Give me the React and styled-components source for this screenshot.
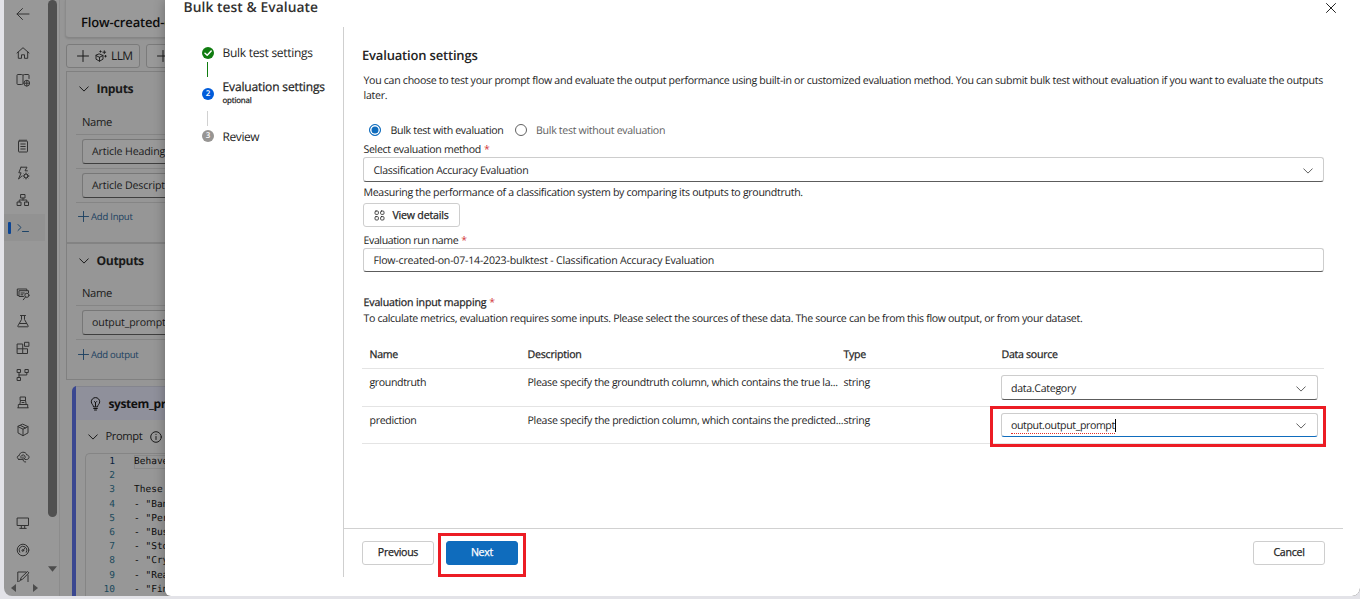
import React from 'react';
import styled, { createGlobalStyle, css } from 'styled-components';

const GlobalStyle = createGlobalStyle`
  * { box-sizing: border-box; }
  body {
    margin: 0;
    background: #e3e3e8;
    font-family: 'Open Sans', 'Noto Sans', sans-serif;
    font-size: 10.6px;
    color: #242424;
    overflow: hidden;
    text-rendering: geometricPrecision;
  }
`;

const Window = styled.div`
  position: relative;
  display: flex;
  width: 1356px;
  height: 596px;
  margin-left: 4px;
  background: #989898;
  border-radius: 0 0 8px 8px;
  overflow: hidden;
`;

const Text = styled.span`
  display: block;
  flex: none;
  white-space: nowrap;
  font-size: ${(p) => p.$size || 10.6}px;
  font-weight: ${(p) => p.$weight || 400};
  letter-spacing: ${(p) => p.$ls ?? -0.28}px;
  line-height: ${(p) => p.$h || 16}px;
  color: ${(p) => p.$color || 'inherit'};
  ${(p) => p.$medium && css`-webkit-text-stroke: 0.25px currentColor;`}
`;

const Svg = styled.svg`
  display: block;
  flex: none;
  fill: none;
  stroke: currentColor;
  stroke-width: ${(p) => p.$sw || 1};
  stroke-linecap: round;
  stroke-linejoin: round;
`;

/* ---------- icons ---------- */

const paths = {
  back: <path d="M13 7H1M6.5 1.5 1 7l5.500 5.500" />,
  home: <path d="M2.300 6v6.300H5.500V8.800h3v3.500h3.200V6M1 7l6-5.300L13 7" />,
  book: (
    <>
      <path d="M7 2.200C6.500 1.700 6 1.500 5.300 1.500H1.800c-.5 0-.8.300-.8.800v8.400c0 .5.300.8.800.8h3.500c.7 0 1.200-.2 1.700-.7V2.200c.5-.5 1-.7 1.700-.7h3.500c.5 0 .8.300.8.800v3.200" />
      <circle cx="10.800" cy="10.200" r="2.900" />
      <path d="M8 10.200h5.600M10.800 7.400v5.600" />
    </>
  ),
  notepad: (
    <>
      <rect x="2.500" y="2" width="9" height="11" rx=".6" />
      <path d="M4.800 5h4.400M4.800 7.500h4.400M4.800 10h4.400M4 .9v1M6 .9v1M8 .9v1M10 .9v1" />
    </>
  ),
  bolt: (
    <>
      <path d="M5 1.200h6L9 4.800h2.400M5 1.200 2.800 6.800h2.300L2.500 13l3.400-3" />
      <circle cx="10" cy="10" r="2" />
      <path d="M10 7v1M10 12v1M7 10h1M12 10h1M8 8l.6.6M12 12l-.6-.6M12 8l-.6.6M8 12l.6-.6" />
    </>
  ),
  sitemap: (
    <>
      <rect x="5" y="1.500" width="4" height="3.500" />
      <rect x="1.500" y="9" width="3.500" height="3.500" />
      <rect x="9" y="9" width="3.500" height="3.500" />
      <path d="M7 5v2M3.200 9V7h7.600v2" />
    </>
  ),
  prompt: <path d="M2 3.500 5 6.500 2 9.500M6.500 10.500h6" />,
  dataSearch: (
    <>
      <path d="M2.500 8.500H1.300V2h9.500v1.500" />
      <path d="M7.500 9.500H3V3.700h9.500v2M5 6h3.300M5 7.800h1.800" />
      <circle cx="10.900" cy="8.300" r="2.100" />
      <path d="m9.500 10-2.200 2.800" />
    </>
  ),
  flask: <path d="M5.500 1.500v4L1.800 12c-.2.400 0 .8.500.8h9.400c.5 0 .7-.4.500-.8L8.500 5.500v-4M4.500 1.500h5M3.500 9.500h7" />,
  blocks: (
    <>
      <path d="M1.500 3h5.200v9.500H1.500zM1.500 7.800h10v4.700H6.700" />
      <rect x="8.900" y="1.300" width="4" height="4" />
    </>
  ),
  flow: (
    <>
      <rect x="1.500" y="1.500" width="3" height="3" />
      <rect x="9.300" y="1.500" width="3" height="3" />
      <rect x="1.500" y="9.500" width="3" height="3" />
      <path d="M3 4.500v5M3 7h7.800V4.500" />
    </>
  ),
  stamp: <path d="M4.500 2h5v3.500h-5zM4.500 5.500 3.800 9.500M9.500 5.500l.7 4M1.800 12.800h10.400M2.300 12.500v-3h9.400v3M6 7.500h2" />,
  cube: <path d="M7 1.300 12 3.600v6.300L7 12.700 2 9.900V3.600zM2 3.600l5 2.600 5-2.600M7 6.200v6.500M4.500 2.500l5 2.500" />,
  cloud: (
    <>
      <path d="M3.500 9.500C.5 9.300.6 5.600 3.300 5.500 3.500 1.500 10 1 10.700 4.900c3.100.1 3.100 4.400 0 4.600H9" />
      <path d="M5 8a2.200 2.200 0 1 1 3.500.8M7 7v1.800c0 2 .8 3.400 2.700 3.200M2.500 9.400h4" />
    </>
  ),
  monitor: <path d="M1.500 2h11v7.500h-11zM5.300 9.500v2.700M8.700 9.500v2.700M3.800 12.400h6.400" />,
  gauge: (
    <>
      <circle cx="7" cy="7" r="5.800" />
      <path d="M3.700 9.200a3.900 3.900 0 0 1 5-5.600M10.500 5.300a4 4 0 0 1-.2 4M9.800 4 7 7.500" />
      <circle cx="6.800" cy="7.500" r=".9" />
    </>
  ),
  edit: <path d="M10 2H1.800v10.500H12V5M4.500 9.800l.6-2.200L11.500 1.500l1.400 1.300-6.200 6.300zM2.500 12 5 9.500" />,
};

const Icon = ({ name, size = 14, sw }) => (
  <Svg width={size} height={size} viewBox="0 0 14 14" $sw={sw}>{paths[name]}</Svg>
);

const Chevron = ({ size = 10 }) => (
  <Svg width={size} height={size} viewBox="0 0 10 10"><path d="m.7 2.800 4.300 4.300 4.300-4.300" /></Svg>
);

const Plus = ({ size = 12 }) => (
  <Svg width={size} height={size} viewBox="0 0 12 12"><path d="M6 .5v11M.5 6h11" /></Svg>
);

/* ---------- navigation rail ---------- */

const Rail = styled.nav`
  width: 44px;
  height: 596px;
  display: flex;
  flex-direction: column;
  color: #323232;
`;

const RailTop = styled.div`
  flex: none;
  height: 39px;
  padding: 7px 0 0 12px;
`;

const RailGroup = styled.div`
  flex: none;
  display: flex;
  flex-direction: column;
  margin-bottom: 39px;
`;

const LastGroup = styled(RailGroup)`
  height: 73px;
  margin-bottom: 0;
  overflow: hidden;
`;

const RailItem = styled.div`
  position: relative;
  flex: none;
  width: 41px;
  height: 27.200px;
  display: flex;
  align-items: center;
  padding-left: 12px;
  ${(p) => p.$active && css`
    background: #929292;
    color: #1d4468;
    &::before {
      content: '';
      position: absolute;
      left: 4px;
      top: 8px;
      width: 3px;
      height: 12px;
      border-radius: 1px;
      background: #0b4494;
    }
  `}
`;

const ScrollRow = styled.div`
  height: 14px;
  display: flex;
  gap: 14px;
  padding: 2px 0 0 6px;
`;

const ScrollTrack = styled.div`
  width: 9px;
  height: 596px;
  display: flex;
  flex-direction: column;
  align-items: center;
`;

const Thumb = styled.div`
  width: 9px;
  height: 517px;
  border-radius: 5px;
  background: #505050;
  margin-bottom: 48px;
`;

const Arrow = ({ d, w = 8, h = 8 }) => (
  <svg width={w} height={h} viewBox="0 0 8 8" fill="#4c4c4c"><path d={d} /></svg>
);

/* ---------- flow editor ---------- */

const Editor = styled.main`
  width: 200px;
  height: 596px;
  margin-left: 2px;
  padding-left: 6px;
  border-left: 1px solid #8c8c8c;
  background: #969696;
  display: flex;
  flex-direction: column;
  color: #1a1a1a;
  > * { flex: none; }
`;

const FlowTitle = styled.header`
  height: 38px;
  margin-left: -1px;
  padding: 14px 0 0 15px;
  background: #999;
  border-left: 1px solid #8b8b8b;
  border-bottom: 1px solid #858585;
  border-radius: 0 0 0 4px;
  box-shadow: 0 1px 2px rgba(0, 0, 0, 0.12);
  color: #0c0c0c;
`;

const Toolbar = styled.div`
  display: flex;
  gap: 6px;
  margin-top: 6px;
`;

const ToolButton = styled.div`
  width: 74px;
  height: 24px;
  flex: none;
  display: flex;
  align-items: center;
  padding-left: ${(p) => p.$left || 10}px;
  border: 1px solid #7b7b7b;
  border-radius: 3px;
  background: #999;
`;

const LlmIcon = styled(Svg)`
  margin: 0 4px 0 6px;
`;

const IoPanel = styled.section`
  margin-top: 3px;
  height: 309px;
  border: 1px solid #808080;
  border-right: 0;
  display: flex;
  flex-direction: column;
`;

const Section = styled.div`
  flex: none;
  height: ${(p) => p.$height}px;
  padding-left: 9px;
  border-bottom: ${(p) => (p.$last ? 0 : 2)}px solid #838383;
`;

const SectionHead = styled.div`
  display: flex;
  align-items: center;
  gap: 8px;
  height: 34px;
  padding-left: 2.5px;
`;

const ColumnHead = styled.div`
  height: ${(p) => p.$height}px;
  padding: ${(p) => p.$top}px 0 0 6px;
  border-bottom: 1px solid #858585;
`;

const FieldRow = styled.div`
  height: 34px;
  padding: 4px 0 0 6px;
  border-bottom: 1px solid #858585;
`;

const Field = styled.div`
  height: 25px;
  padding: 4px 0 0 9px;
  border: 1px solid #777;
  border-bottom-color: #3f3f3f;
  border-radius: 3px;
  background: #999;
`;

const AddLink = styled.div`
  display: flex;
  align-items: center;
  gap: 2px;
  height: ${(p) => p.$height || 27}px;
  padding-left: 2px;
  color: #1b3f60;
`;

const NodeCard = styled.section`
  margin: 6px 0 0 6px;
  height: 210px;
  border-left: 4px solid #3a4790;
  border-radius: 5px 0 0 0;
  background: #979797;
`;

const NodeHead = styled.div`
  height: 34px;
  display: flex;
  align-items: center;
  gap: 7.500px;
  padding-left: 14px;
  background: #8f909b;
  border-top: 1px solid #84858e;
  color: #111;
`;

const PromptRow = styled.div`
  height: 33px;
  display: flex;
  align-items: center;
  padding-left: 11.500px;
`;

const PromptLabel = styled(Text)`
  margin: 0 8px 0 8px;
`;

const CodeBox = styled.div`
  height: 143px;
  margin-left: 9px;
  padding-top: 1px;
  border: 1px solid #858585;
  border-right: 0;
  border-bottom: 0;
  border-radius: 5px 0 0 0;
  overflow: hidden;
  font: 9.5px/14.200px 'DejaVu Sans Mono', monospace;
`;

const CodeLine = styled.div`
  display: grid;
  grid-template-columns: 29px 1fr;
  column-gap: 19px;
  height: 14.200px;
  white-space: pre;
  color: #0e0e0e;
`;

const LineNo = styled.span`
  text-align: right;
  color: ${(p) => (p.$first ? '#0b2240' : '#1c4a5c')};
`;

const CodeText = styled.span`
  ${(p) => p.$first && css`
    box-shadow: inset 1px 1px #898989, inset 0 -1px #898989;
  `}
`;

/* ---------- dialog ---------- */

const Dialog = styled.section`
  position: absolute;
  left: 161px;
  top: 0;
  width: 1195px;
  height: 596px;
  background: #fff;
  border-radius: 0 0 8px 6px;
  box-shadow: 0 0 12px rgba(0, 0, 0, 0.3);
  display: flex;
  flex-direction: column;
`;

const DialogHead = styled.header`
  height: 27px;
  padding: 0 24px 0 18.500px;
  display: flex;
  justify-content: space-between;
`;

const CloseIcon = styled(Svg)`
  margin-top: 3px;
`;

const DialogBody = styled.div`
  display: flex;
  height: 550px;
`;

const Steps = styled.aside`
  width: 178px;
  padding: 16px 0 0 37px;
`;

const Step = styled.div`
  display: flex;
  align-items: center;
  gap: 8.500px;
  height: ${(p) => p.$height}px;
`;

const StepDot = styled.span`
  width: 12px;
  height: 12px;
  border-radius: 50%;
  background: ${(p) => p.$color};
  color: #fff;
  font-size: 8px;
  font-weight: 600;
  line-height: 12px;
  text-align: center;
  flex: none;
`;

const StepLabel = styled.div`
  display: flex;
  flex-direction: column;
  padding-bottom: ${(p) => p.$lift || 0}px;
  padding-top: ${(p) => p.$drop || 0}px;
`;

const Connector = styled.div`
  width: 1px;
  height: 15px;
  margin-left: 5px;
  background: ${(p) => p.$color};
`;

const Content = styled.div`
  width: 1000px;
  border-left: 1px solid #cfcfcf;
  display: flex;
  flex-direction: column;
`;

const Form = styled.div`
  flex: 1;
  width: 981px;
  padding: 18px 0 0 19px;
`;

const Heading = styled.div`
  height: 29px;
  margin-left: -1px;
`;

const Intro = styled.div`
  height: 47px;
  padding-left: 0.5px;
`;

const RadioRow = styled.div`
  display: flex;
  align-items: center;
  height: 18px;
  margin: 0 0 2px 6px;
  ${Text} { padding-top: 1px; }
`;

const Radio = styled.span`
  width: 12px;
  height: 12px;
  border: 1px solid ${(p) => (p.$on ? '#0f6cbd' : '#616161')};
  border-radius: 50%;
  background: ${(p) => (p.$on ? '#0f6cbd' : '#fff')};
  box-shadow: inset 0 0 0 1.500px #fff;
  margin: 0 9.500px 0 ${(p) => (p.$on ? 0 : 11)}px;
`;

const Label = styled.div`
  display: flex;
  gap: 3px;
  height: 16px;
  padding: 1px 0 0 0.5px;
`;

const Required = styled.span`
  color: #d13438;
  font-size: 10.5px;
  line-height: 16px;
`;

const Box = styled.div`
  position: relative;
  width: ${(p) => p.$width || 961}px;
  height: ${(p) => p.$height || 25}px;
  margin-left: ${(p) => p.$shift || 0}px;
  display: flex;
  align-items: center;
  justify-content: space-between;
  padding: ${(p) => p.$top ?? 2}px 10.500px 0 9.500px;
  border: 1px solid #cdcdcd;
  border-bottom-color: ${(p) => (p.$focus ? '#0f6cbd' : '#5c5c5c')};
  border-radius: 3px;
  color: #242424;
  > svg { color: #616161; }
`;

const Hint = styled.div`
  height: 21px;
  padding: 3px 0 0 0.5px;
`;

const Button = styled.button`
  display: flex;
  align-items: center;
  justify-content: center;
  gap: 7px;
  width: ${(p) => p.$width || 72}px;
  height: 24px;
  padding: 0 0 ${(p) => p.$lift || 0}px;
  border: 1px solid ${(p) => (p.$primary ? '#0f6cbd' : '#cecece')};
  border-radius: 3px;
  background: ${(p) => (p.$primary ? '#0f6cbd' : '#fff')};
  color: ${(p) => (p.$primary ? '#fff' : '#242424')};
  font-family: inherit;
`;

const RunName = styled.div`
  margin: 5px 0 22px;
`;

const Explanation = styled.div`
  padding: 1px 0 0 0.5px;
`;

const Table = styled.div`
  width: 962px;
  margin: 14px 0 0 -1px;
`;

const Row = styled.div`
  display: grid;
  grid-template-columns: 158px 316px 158px 317px;
  padding: 6px 0 0 7.500px;
  height: ${(p) => p.$height}px;
  border-bottom: 1px solid #e4e4e4;
`;

const Squiggle = styled(Text)`
  margin-top: 2px;
  border-bottom: 1px dotted #e03030;
`;

const Caret = styled.span`
  width: 1px;
  height: 13px;
  margin-right: auto;
  background: #000;
`;

const Callout = styled.div`
  position: absolute;
  inset: ${(p) => p.$inset};
  border: 3px solid #ec1c24;
  pointer-events: none;
`;

const Footer = styled.footer`
  height: 49px;
  display: flex;
  gap: 12px;
  padding: 12px 18px 0 18px;
  border-top: 1px solid #d1d1d1;
  width: 999px;
`;

const Highlighted = styled.div`
  position: relative;
  height: 24px;
  margin-right: auto;
`;

const code = ['Behave as', '', 'These are', '- "Banking"', '- "Personal', '- "Business', '- "Stocks"', '- "Crypto"', '- "Real', '- "Finance'];

const groups = [
  ['home', 'book'],
  ['notepad', 'bolt', 'sitemap', 'prompt'],
  ['dataSearch', 'flask', 'blocks', 'flow', 'stamp', 'cube', 'cloud'],
];

export default function App() {
  return (
    <>
      <GlobalStyle />
      <Window>
        <Rail>
          <RailTop><Icon name="back" /></RailTop>
          {groups.map((g) => (
            <RailGroup key={g[0]}>
              {g.map((n) => <RailItem key={n} $active={n === 'prompt'}><Icon name={n} /></RailItem>)}
            </RailGroup>
          ))}
          <LastGroup>
            {['monitor', 'gauge', 'edit'].map((n) => <RailItem key={n}><Icon name={n} /></RailItem>)}
          </LastGroup>
          <ScrollRow>
            <Arrow d="M6 0v8L1 4z" />
            <Arrow d="M1 0v8l5-4z" />
          </ScrollRow>
        </Rail>
        <ScrollTrack>
          <Thumb />
          <Arrow d="M0 1h8L4 6z" w={9} h={9} />
        </ScrollTrack>

        <Editor>
          <FlowTitle><Text $size={13} $weight={600} $ls={-0.15}>Flow-created-on</Text></FlowTitle>
          <Toolbar>
            <ToolButton>
              <Plus />
              <LlmIcon width="12" height="12" viewBox="0 0 12 12" $sw={0.9}>
                <path d="M4.500 4 8 5.500v3.700l-3.500 2L1 9.200V5.500zM1 5.500l3.500 1.800L8 5.500M4.500 7.300v3.900M9.300 .8v2.800M7.900 2.200h2.800M10.500 5.400v1.600M9.700 6.200h1.600M5.500 .8v1.400M4.800 1.500h1.400" />
              </LlmIcon>
              <Text $size={12} $ls={-0.6}>LLM</Text>
            </ToolButton>
            <ToolButton><Plus /></ToolButton>
          </Toolbar>
          <IoPanel>
            <Section $height={172}>
              <SectionHead><Chevron /><Text $size={12.200} $weight={700} $ls={-0.4}>Inputs</Text></SectionHead>
              <ColumnHead $height={29} $top={9}><Text $size={11.200} $ls={-0.35}>Name</Text></ColumnHead>
              <FieldRow><Field><Text $ls={-0.12}>Article Heading</Text></Field></FieldRow>
              <FieldRow><Field><Text $ls={-0.12}>Article Description</Text></Field></FieldRow>
              <AddLink><Plus size={11} /><Text $size={9.500} $ls={-0.22}>Add Input</Text></AddLink>
            </Section>
            <Section $height={135} $last>
              <SectionHead><Chevron /><Text $size={12.200} $weight={700} $ls={-0.4}>Outputs</Text></SectionHead>
              <ColumnHead $height={28} $top={8}><Text $size={11.200} $ls={-0.35}>Name</Text></ColumnHead>
              <FieldRow><Field><Text $ls={-0.12}>output_prompt</Text></Field></FieldRow>
              <AddLink $height={29}><Plus size={11} /><Text $size={9.500} $ls={-0.27}>Add output</Text></AddLink>
            </Section>
          </IoPanel>
          <NodeCard>
            <NodeHead>
              <Svg width="11" height="14" viewBox="0 0 11 14">
                <path d="M3.500 9.500C3.500 8 1.300 7 1.300 4.800a4.200 4.200 0 0 1 8.400 0C9.700 7 7.500 8 7.500 9.500zM3.700 11.500h3.600M4.500 13h2M5.500 9.300V5.500M4.300 4.500l1.200 1.200 1.200-1.200" />
              </Svg>
              <Text $size={12} $weight={700} $ls={-0.4}>system_prompt</Text>
            </NodeHead>
            <PromptRow>
              <Chevron />
              <PromptLabel $size={11.200} $ls={-0.42}>Prompt</PromptLabel>
              <Svg width="12" height="12" viewBox="0 0 12 12"><circle cx="6" cy="6" r="5.300" /><path d="M6 5.500v3M6 3.300v.2" /></Svg>
            </PromptRow>
            <CodeBox>
              {code.map((t, i) => (
                <CodeLine key={i}><LineNo $first={i === 0}>{i + 1}</LineNo><CodeText $first={i === 0}>{t}</CodeText></CodeLine>
              ))}
            </CodeBox>
          </NodeCard>
        </Editor>

        <Dialog>
          <DialogHead>
            <Text $size={13.800} $weight={600} $ls={0.07} $h={15} $color="#323130">Bulk test &amp; Evaluate</Text>
            <CloseIcon width="10" height="10" viewBox="0 0 10 10"><path d="m.5.500 9 9m0-9-9 9" /></CloseIcon>
          </DialogHead>
          <DialogBody>
            <Steps>
              <Step $height={19}>
                <StepDot $color="#107c10">
                  <Svg width="12" height="12" viewBox="0 0 12 12" $sw={1.500}><path d="m3 6.200 2.200 2.100L9.200 4" /></Svg>
                </StepDot>
                <Text $size={12} $ls={-0.28}>Bulk test settings</Text>
              </Step>
              <Connector $color="#107c10" />
              <Step $height={34}>
                <StepDot $color="#015cda">2</StepDot>
                <StepLabel $lift={1}>
                  <Text $size={12} $medium $ls={-0.14} $h={15}>Evaluation settings</Text>
                  <Text $size={7.900} $medium $ls={-0.16} $h={14}>optional</Text>
                </StepLabel>
              </Step>
              <Connector $color="#d1d1d1" />
              <Step $height={20}>
                <StepDot $color="#979593">3</StepDot>
                <StepLabel $drop={1}><Text $size={12} $ls={-0.42}>Review</Text></StepLabel>
              </Step>
            </Steps>
            <Content>
              <Form>
                <Heading><Text $size={13} $weight={600} $ls={-0.18} $h={20}>Evaluation settings</Text></Heading>
                <Intro>
                  <Text $h={15} $ls={-0.3}>You can choose to test your prompt flow and evaluate the output performance using built-in or customized evaluation method. You can submit bulk test without evaluation if you want to evaluate the outputs</Text>
                  <Text $h={15}>later.</Text>
                </Intro>
                <RadioRow>
                  <Radio $on />
                  <Text $ls={-0.32}>Bulk test with evaluation</Text>
                  <Radio />
                  <Text $color="#616161" $ls={-0.31}>Bulk test without evaluation</Text>
                </RadioRow>
                <Label><Text $ls={-0.32}>Select evaluation method</Text><Required>*</Required></Label>
                <Box><Text $ls={-0.31}>Classification Accuracy Evaluation</Text><Chevron /></Box>
                <Hint><Text $ls={-0.305}>Measuring the performance of a classification system by comparing its outputs to groundtruth.</Text></Hint>
                <Button $width={97}>
                  <Svg width="11" height="11" viewBox="0 0 11 11" $sw={0.8}>
                    <rect x="1" y="1" width="3.400" height="3.400" rx="1" /><rect x="6.600" y="1" width="3.400" height="3.400" rx="1" />
                    <rect x="1" y="6.600" width="3.400" height="3.400" rx="1" /><rect x="6.600" y="6.600" width="3.400" height="3.400" rx="1" />
                  </Svg>
                  <Text $medium $ls={-0.18}>View details</Text>
                </Button>
                <RunName>
                  <Label><Text $ls={-0.4}>Evaluation run name</Text><Required>*</Required></Label>
                  <Box $height={24} $top={1}><Text $ls={-0.215}>Flow-created-on-07-14-2023-bulktest - Classification Accuracy Evaluation</Text></Box>
                </RunName>
                <Label><Text $medium $ls={-0.15}>Evaluation input mapping</Text><Required>*</Required></Label>
                <Explanation>
                  <Text $ls={-0.335}>To calculate metrics, evaluation requires some inputs. Please select the sources of these data. The source can be from this flow output, or from your dataset.</Text>
                </Explanation>
                <Table>
                  <Row $height={28}>
                    <Text $medium>Name</Text><Text $medium $ls={-0.22}>Description</Text><Text $medium>Type</Text><Text $medium>Data source</Text>
                  </Row>
                  <Row $height={38}>
                    <Text $ls={-0.38}>groundtruth</Text>
                    <Text $ls={-0.32}>Please specify the groundtruth column, which contains the true la...</Text>
                    <Text>string</Text>
                    <Box $width={317} $shift={-1}><Text $ls={-0.3}>data.Category</Text><Chevron /></Box>
                  </Row>
                  <Row $height={37}>
                    <Text $ls={-0.33}>prediction</Text>
                    <Text $ls={-0.305}>Please specify the prediction column, which contains the predicted...</Text>
                    <Text>string</Text>
                    <Box $width={317} $shift={-1} $height={24} $top={1} $focus>
                      <Squiggle $h={13} $ls={-0.38}>output.output_prompt</Squiggle><Caret /><Chevron />
                      <Callout $inset="-8px -9px -11px -12px" />
                    </Box>
                  </Row>
                </Table>
              </Form>
              <Footer>
                <Button $lift={2}><Text $medium $ls={-0.28}>Previous</Text></Button>
                <Highlighted>
                  <Button $primary $lift={2}><Text $medium>Next</Text></Button>
                  <Callout $inset="-8px -8px -12px -8px" />
                </Highlighted>
                <Button $lift={2}><Text $medium>Cancel</Text></Button>
              </Footer>
            </Content>
          </DialogBody>
        </Dialog>
      </Window>
    </>
  );
}
